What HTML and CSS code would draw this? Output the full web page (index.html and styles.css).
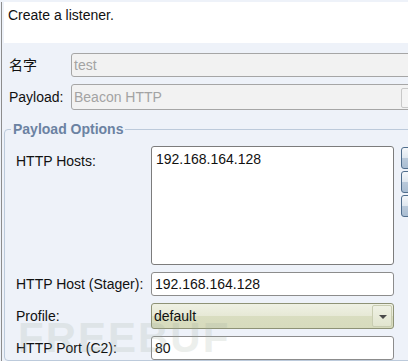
FILE: index.html
```html
<!DOCTYPE html>
<html lang="en">
<head>
  <meta charset="UTF-8">
  <title>New Listener</title>
  <link rel="stylesheet" href="styles.css">
</head>
<body>
  <div class="frame">
    <div class="banner">Create a listener.</div>

    <div class="top-form">
      <label class="lbl">名字</label>
      <div class="field disabled">test</div>

      <label class="lbl">Payload:</label>
      <div class="field disabled combo">
        Beacon HTTP
        <span class="combo-btn"></span>
      </div>
    </div>

    <fieldset class="options">
      <legend>Payload Options</legend>

      <div class="opt-grid">
        <label class="lbl lbl-top">HTTP Hosts:</label>
        <div class="hosts">192.168.164.128</div>
        <div class="side-btns">
          <span class="sbtn"></span>
          <span class="sbtn"></span>
          <span class="sbtn"></span>
        </div>

        <label class="lbl">HTTP Host (Stager):</label>
        <div class="field">192.168.164.128</div>
        <span></span>

        <label class="lbl">Profile:</label>
        <div class="select">
          default
          <span class="arrow"><i></i></span>
        </div>
        <span></span>

        <label class="lbl">HTTP Port (C2):</label>
        <div class="field">80</div>
        <span></span>
      </div>
    </fieldset>

    <!-- site watermark over the form -->
    <div class="watermark">FREEBUF</div>
  </div>
</body>
</html>
```

FILE: styles.css
```css
html, body {
  margin: 0;
  height: 100%;
  overflow: hidden;
}

body {
  background: #eef2f9;
  font-family: "Liberation Sans", Arial, "Noto Sans CJK SC", sans-serif;
  font-size: 14px;
  color: #111;
  padding-left: 1px;
}

.frame {
  position: relative;
  height: 100%;
  border-left: 1px solid #8d8d8d;
  width: 440px;
}

.banner {
  margin: 2px 0 0 2px;
  height: 41px;
  background: #fff;
  padding: 5px 0 0 4px;
  box-sizing: border-box;
  line-height: 16px;
}

.top-form {
  display: grid;
  grid-template-columns: 62px 360px;
  row-gap: 7px;
  align-items: center;
  margin: 10px 0 0 7px;
}

.lbl {
  white-space: nowrap;
  line-height: 16px;
}

.field {
  height: 24px;
  box-sizing: border-box;
  background: #fff;
  border: 1px solid #8c8c8c;
  border-radius: 3px;
  padding: 0 3px;
  line-height: 22px;
}

.field.disabled {
  background: #f2f2f2;
  border-color: #a6a6a6;
  color: #a3a3a3;
  padding-left: 2px;
}

.field.combo {
  position: relative;
  height: 26px;
  line-height: 24px;
}

.combo-btn {
  position: absolute;
  left: 329px;
  top: 3px;
  width: 20px;
  height: 18px;
  border: 1px solid #c8c8c8;
  border-radius: 2px;
  background: #f4f4f4;
}

.options {
  margin: 11px 0 0 2px;
  padding: 9px 0 0 0;
  border: 1px solid #bccadb;
  border-radius: 4px;
  min-width: 0;
}

.options legend {
  font-weight: bold;
  color: #6b82a2;
  padding: 0 2px;
  margin-left: 6px;
  line-height: 16px;
}

.opt-grid {
  display: grid;
  grid-template-columns: 135px 243px 7px 30px;
  row-gap: 7px;
  align-items: center;
  padding-left: 11px;
}

.opt-grid > .lbl {
  grid-column: 1;
}

.opt-grid > :nth-child(3n+2) {
  grid-column: 2;
}

.opt-grid > :nth-child(3n) {
  grid-column: 4;
}

.lbl-top {
  align-self: start;
  padding-top: 7px;
}

.hosts {
  height: 119px;
  box-sizing: border-box;
  background: #fff;
  border: 1px solid #7c7c7c;
  border-radius: 3px;
  padding: 4px 4px;
  line-height: 16px;
}

.side-btns {
  align-self: start;
  display: flex;
  flex-direction: column;
  gap: 2px;
  padding-top: 1px;
}

.sbtn {
  display: block;
  height: 22px;
  box-sizing: border-box;
  border: 1px solid #4f6d8c;
  border-radius: 3px;
  background: linear-gradient(#f4f7fa, #dfe7ef 48%, #b9c9da 52%, #a9bdd2);
}

.select {
  position: relative;
  height: 26px;
  box-sizing: border-box;
  border: 1px solid #8e9276;
  border-radius: 3px;
  background: linear-gradient(#eff1e4, #e7e9d6 48%, #d9ddc0 52%, #d7dbbd);
  padding: 0 2px;
  line-height: 24px;
}

.select .arrow {
  position: absolute;
  right: 1px;
  top: 1px;
  width: 20px;
  height: 22px;
  box-sizing: border-box;
  border: 1px solid #c9cdb2;
  border-radius: 2px;
  background: linear-gradient(#eff1e4, #e2e5cf);
}

.select .arrow i {
  position: absolute;
  left: 6px;
  top: 9px;
  border-left: 4px solid transparent;
  border-right: 4px solid transparent;
  border-top: 4px solid #4a4a4a;
}

.watermark {
  position: absolute;
  left: 16px;
  top: 316px;
  font: bold 42px/40px "Liberation Sans", Arial, sans-serif;
  letter-spacing: 2px;
  color: #9aa89a;
  opacity: 0.18;
  pointer-events: none;
}
```
